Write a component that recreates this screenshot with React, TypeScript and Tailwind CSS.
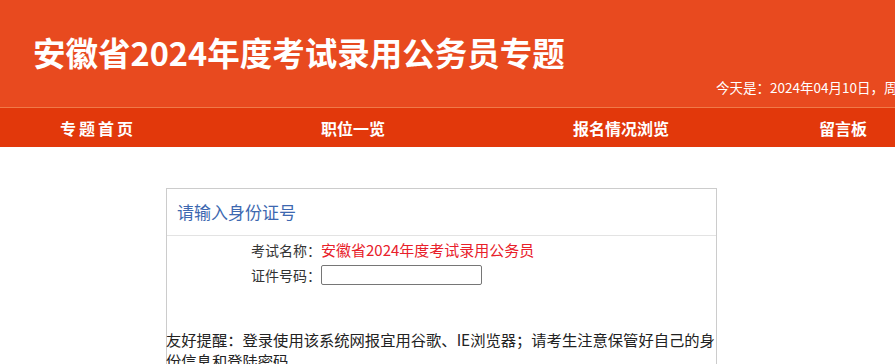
export default function App() {
  const navItems = [
    { label: "专题首页", cls: "tracking-[3px]" },
    { label: "职位一览", cls: "" },
    { label: "报名情况浏览", cls: "" },
    { label: "留言板", cls: "" },
  ];

  return (
    <div className="min-h-screen bg-white overflow-hidden font-['Noto_Sans_CJK_SC','Noto_Sans',sans-serif]">
      <header className="h-[107px] bg-[#e84a1f] text-white flex flex-col">
        <h1 className="pl-[33px] pt-[28px] text-[32.5px] leading-[48px] font-bold whitespace-nowrap">
          安徽省2024年度考试录用公务员专题
        </h1>
        <div className="pl-[716px] mt-[2px] text-[13.5px] leading-[18px] whitespace-nowrap">
          今天是：2024年04月10日，周三
        </div>
      </header>
      <div className="h-px bg-[#f07a48]" />
      <nav className="h-[39px] bg-[#e2380b] grid grid-cols-[196px_314px_222px_222px] items-center text-white text-[16px] font-bold whitespace-nowrap">
        {navItems.map((item) => (
          <div key={item.label} className={`text-center ${item.cls}`}>
            {item.label}
          </div>
        ))}
      </nav>

      <main className="pt-[41px] pl-[166px]">
        <div className="w-[551px] border border-[#cccccc] border-b-0">
          <div className="h-[47px] border-b border-[#e3e3e3] flex items-center pl-[10px] text-[17px] text-[#3d68b0]">
            请输入身份证号
          </div>
          <div className="pt-[2px] text-[14px] text-[#333]">
            <div className="flex items-center h-[24px]">
              <span className="w-[154px] text-right">考试名称：</span>
              <span className="text-[15px] text-[#e8202a]">安徽省2024年度考试录用公务员</span>
            </div>
            <div className="flex items-center h-[26px]">
              <span className="w-[154px] text-right">证件号码：</span>
              <input
                type="text"
                className="w-[161px] h-[20px] border border-[#767676] rounded-[2px] outline-none"
              />
            </div>
          </div>
          <p className="mt-[41px] -ml-px text-[15.3px] leading-[21px] text-[#222] whitespace-nowrap">
            友好提醒：登录使用该系统网报宜用谷歌、IE浏览器；请考生注意保管好自己的身
            <br />
            份信息和登陆密码。
          </p>
        </div>
      </main>
    </div>
  );
}
